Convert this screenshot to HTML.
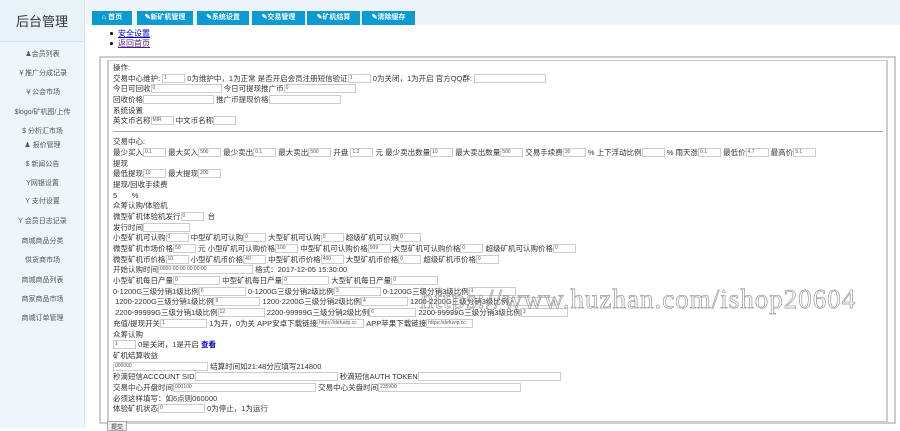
<!DOCTYPE html>
<html><head><meta charset="utf-8"><style>
*{margin:0;padding:0;box-sizing:border-box}
body{width:900px;height:428px;overflow:hidden;background:#fff;font-family:"Liberation Sans","Noto Sans CJK SC",sans-serif;font-size:7.5px;color:#333;position:relative}
#side{position:absolute;left:0;top:0;width:85px;height:428px;background:#eef6fb;border-right:1px solid #d6e4ee}
#side .hd{height:42px;background:#e8f2f9;border-bottom:1px solid #d2e2ee;text-align:center;font-size:13px;line-height:44px;color:#333}
#side .it{position:absolute;left:0;width:85px;text-align:center;font-size:7px;color:#555}
#top{position:absolute;left:86px;top:0;width:814px;height:25px;background:#eef5fa}
.tab{position:absolute;top:11px;height:14px;background:#0b9bd2;color:#fff;font-size:7px;font-weight:bold;text-align:center;line-height:14px}
.lk{position:absolute;left:110px;font-size:8px}
.lk a{color:#00c;text-decoration:underline;margin-left:8px}
.lk:before{content:"";position:absolute;left:0;top:4px;width:3px;height:3px;background:#000;border-radius:50%}
#outer{position:absolute;left:99px;top:56px;width:797px;height:368px;border:2px solid #ccc}
#inner{position:absolute;left:107px;top:60px;width:781px;height:363px;border:2px solid #ccc;border-top-width:1px}
#form{position:absolute;left:113px;top:63px;width:770px}
.r{height:10.7px;line-height:10.7px;white-space:nowrap}
i{display:inline-block;height:9px;border:1px solid #ccc;vertical-align:middle;font-style:normal;font-size:5px;line-height:7px;padding-left:1px;color:#555;margin-top:-1px}
hr{border:0;border-top:1px solid #aaa;margin:4px 0 5px}
#wm{position:absolute;left:420px;top:284px;font-family:"Liberation Serif",serif;font-size:27px;color:transparent;-webkit-text-stroke:0.7px #999;letter-spacing:1px}
#btn{position:absolute;left:107px;top:421px;width:20px;height:10px;border:1px solid #aaa;background:#eee;font-size:6px;text-align:center}
</style></head><body>
<div id="side"><div class="hd">后台管理</div>
<div class="it" style="top:49px">♟会员列表</div>
<div class="it" style="top:68px">￥推广分成记录</div>
<div class="it" style="top:87px">￥公会市场</div>
<div class="it" style="top:107px">$logo/矿机图/上传</div>
<div class="it" style="top:126px">$ 分析汇市场</div>
<div class="it" style="top:140px">♟ 报价管理</div>
<div class="it" style="top:159px">$ 新闻公告</div>
<div class="it" style="top:178px">Y网银设置</div>
<div class="it" style="top:196px">Y 支付设置</div>
<div class="it" style="top:216px">Y 会员日志记录</div>
<div class="it" style="top:236px">商城商品分类</div>
<div class="it" style="top:255px">供货商市场</div>
<div class="it" style="top:275px">商城商品列表</div>
<div class="it" style="top:294px">商家商品市场</div>
<div class="it" style="top:313px">商城订单管理</div>
</div>
<div id="top"></div>
<div class="tab" style="left:92px;width:40px">⌂ 首页</div>
<div class="tab" style="left:137px;width:56px">✎新矿机管理</div>
<div class="tab" style="left:197px;width:52px">✎系统设置</div>
<div class="tab" style="left:252px;width:53px">✎交易管理</div>
<div class="tab" style="left:307px;width:53px">✎矿机结算</div>
<div class="tab" style="left:362px;width:53px">✎清除缓存</div>
<div class="lk" style="top:28px"><a>安全设置</a></div>
<div class="lk" style="top:38px"><a style="color:#551a8b">返回首页</a></div>
<div id="outer"></div><div id="inner"></div>
<div id="form">
<div class="r">操作:</div>
<div class="r">交易中心维护: <i style="width:23px">1</i> 0为维护中，1为正常 是否开启会员注册短信验证<i style="width:23px">1</i> 0为关闭，1为开启 官方QQ群: <i style="width:72px"></i></div>
<div class="r">今日可回收<i style="width:71px">0</i> 今日可提现推广币<i style="width:72px">0</i></div>
<div class="r">回收价格<i style="width:71px"></i> 推广币提现价格<i style="width:72px"></i></div>
<div class="r">系统设置</div>
<div class="r">英文币名称<i style="width:23px">MIR</i> 中文币名称<i style="width:23px"></i></div>
<hr>
<div class="r">交易中心:</div>
<div class="r">最少买入<i style="width:23px">0.1</i> 最大买入<i style="width:23px">500</i> 最少卖出<i style="width:23px">0.1</i> 最大卖出<i style="width:23px">500</i> 开盘 <i style="width:23px">1.2</i> 元 最少卖出数量<i style="width:23px">10</i> 最大卖出数量<i style="width:23px">500</i> 交易手续费<i style="width:23px">30</i> % 上下浮动比例<i style="width:23px"></i> % 雨天涨<i style="width:23px">0.1</i> 最低价<i style="width:23px">4.7</i> 最高价<i style="width:23px">5.1</i></div>
<div class="r">提现</div>
<div class="r">最低提现<i style="width:23px">10</i> 最大提现<i style="width:23px">200</i></div>
<div class="r">提现/回收手续费</div>
<div class="r">5 &nbsp;&nbsp;&nbsp;&nbsp;&nbsp; %</div>
<div class="r">众筹认购/体验机</div>
<div class="r">微型矿机体验机发行<i style="width:23px">0</i> &nbsp;台</div>
<div class="r">发行时间<i style="width:47px"></i></div>
<div class="r">小型矿机可认购<i style="width:23px">0</i> 中型矿机可认购<i style="width:23px">0</i> 大型矿机可认购<i style="width:23px">0</i> 超级矿机可认购<i style="width:23px">0</i></div>
<div class="r">微型矿机市场价格<i style="width:23px">50</i> 元 小型矿机可认购价格<i style="width:23px">100</i> 中型矿机可认购价格<i style="width:23px">999</i> 大型矿机可认购价格<i style="width:23px">0</i> 超级矿机可认购价格<i style="width:23px">0</i></div>
<div class="r">微型矿机币价格<i style="width:23px">10</i> 小型矿机币价格<i style="width:23px">40</i> 中型矿机币价格<i style="width:23px">400</i> 大型矿机币价格<i style="width:23px">0</i> 超级矿机币价格<i style="width:23px">0</i></div>
<div class="r">开始认购时间<i style="width:95px">0000-00-00 00:00:00</i> 格式：2017-12-05 15:30:00</div>
<div class="r">小型矿机每日产量<i style="width:47px">0</i> 中型矿机每日产量<i style="width:47px">0</i> 大型矿机每日产量<i style="width:47px">0</i></div>
<div class="r">0-1200G三级分销1级比例<i style="width:47px">6</i> 0-1200G三级分销2级比例<i style="width:47px">3</i> 0-1200G三级分销3级比例<i style="width:47px">1</i></div>
<div class="r">&nbsp;1200-2200G三级分销1级比例<i style="width:47px">9</i> 1200-2200G三级分销2级比例<i style="width:47px">4</i> 1200-2200G三级分销3级比例<i style="width:47px">1</i></div>
<div class="r">&nbsp;2200-99999G三级分销1级比例<i style="width:47px">12</i> 2200-99999G三级分销2级比例<i style="width:47px">6</i> 2200-99999G三级分销3级比例<i style="width:47px">3</i></div>
<div class="r">充值/提现开关<i style="width:47px">1</i> 1为开，0为关 APP安卓下载链接<i style="width:47px">https://defuvip.cc</i> APP苹果下载链接<i style="width:47px">https://defuvip.cc</i></div>
<div class="r">众筹认购</div>
<div class="r"><i style="width:23px">1</i> 0是关闭，1是开启 <span style="color:#00c;font-weight:bold">查看</span></div>
<div class="r">矿机结算收益</div>
<div class="r"><i style="width:95px">000000</i> 结算时间如21:48分应填写214800</div>
<div class="r">秒滴短信ACCOUNT SID<i style="width:143px"></i> 秒滴短信AUTH TOKEN<i style="width:143px"></i></div>
<div class="r">交易中心开盘时间<i style="width:143px">000100</i> 交易中心关盘时间<i style="width:143px">235900</i></div>
<div class="r">必须这样填写：如6点则060000</div>
<div class="r">体验矿机状态<i style="width:47px">0</i> 0为停止，1为运行</div>
</div>
<div id="wm">https://www.huzhan.com/ishop20604</div>
<div id="btn">提交</div>
</body></html>
